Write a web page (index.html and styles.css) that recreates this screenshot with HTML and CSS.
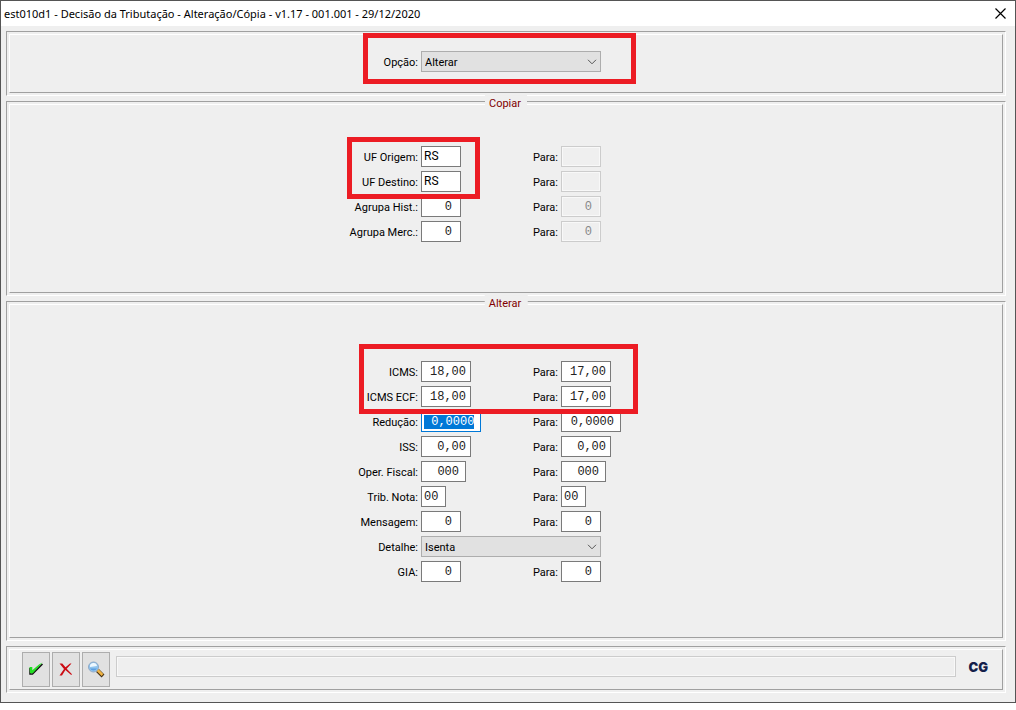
FILE: index.html
```html
<!DOCTYPE html>
<html lang="pt-BR">
<head>
<meta charset="utf-8">
<title>est010d1 - Decisão da Tributação</title>
<link rel="stylesheet" href="styles.css">
</head>
<body>
<main class="window">
  <header class="titlebar">
    <h1 class="title">est010d1 - Decisão da Tributação - Alteração/Cópia - v1.17 - 001.001 - 29/12/2020</h1>
    <button class="close" type="button" aria-label="Fechar">
      <svg width="11" height="11" viewBox="0 0 11 11"><path d="M.5.5l10 10M10.500.5l-10 10" stroke="#000" stroke-width="1.200" fill="none"/></svg>
    </button>
  </header>

  <section class="panel panel-option">
    <div class="panel-inner">
      <div class="form">
        <label for="opcao">Opção:</label>
        <div class="combo">
          <select id="opcao"><option>Alterar</option><option>Copiar</option></select>
          <svg class="chevron" width="10" height="6" viewBox="0 0 10 6"><path d="M1 .8l4 4 4-4"/></svg>
        </div>
        <span class="mark mark-option"></span>
      </div>
    </div>
  </section>

  <section class="panel panel-copy">
    <h2 class="legend">Copiar</h2>
    <div class="panel-inner">
      <div class="form">
        <label for="ufo">UF Origem:</label><input id="ufo" class="w40 alpha" value="RS">
        <label for="ufo2">Para:</label><input id="ufo2" class="w40 alpha" disabled>
        <label for="ufd">UF Destino:</label><input id="ufd" class="w40 alpha" value="RS">
        <label for="ufd2">Para:</label><input id="ufd2" class="w40 alpha" disabled>
        <label for="hist">Agrupa Hist.:</label><input id="hist" class="w40" value="0">
        <label for="hist2">Para:</label><input id="hist2" class="w40" value="0" disabled>
        <label for="merc">Agrupa Merc.:</label><input id="merc" class="w40" value="0">
        <label for="merc2">Para:</label><input id="merc2" class="w40" value="0" disabled>
        <span class="mark mark-uf"></span>
      </div>
    </div>
  </section>

  <section class="panel panel-change">
    <h2 class="legend">Alterar</h2>
    <div class="panel-inner">
      <div class="form">
        <label for="icms">ICMS:</label><input id="icms" class="w50" value="18,00">
        <label for="icms2">Para:</label><input id="icms2" class="w50" value="17,00">
        <label for="ecf">ICMS ECF:</label><input id="ecf" class="w50" value="18,00">
        <label for="ecf2">Para:</label><input id="ecf2" class="w50" value="17,00">
        <label for="red">Redução:</label><input id="red" class="w60" value=" 0,0000">
        <label for="red2">Para:</label><input id="red2" class="w60" value="0,0000">
        <label for="iss">ISS:</label><input id="iss" class="w50" value="0,00">
        <label for="iss2">Para:</label><input id="iss2" class="w50" value="0,00">
        <label for="oper">Oper. Fiscal:</label><input id="oper" class="w45" value="000">
        <label for="oper2">Para:</label><input id="oper2" class="w45" value="000">
        <label for="trib">Trib. Nota:</label><input id="trib" class="w25" value="00">
        <label for="trib2">Para:</label><input id="trib2" class="w25" value="00">
        <label for="msg">Mensagem:</label><input id="msg" class="w40" value="0">
        <label for="msg2">Para:</label><input id="msg2" class="w40" value="0">
        <label for="det">Detalhe:</label>
        <div class="combo">
          <select id="det"><option>Isenta</option></select>
          <svg class="chevron" width="10" height="6" viewBox="0 0 10 6"><path d="M1 .8l4 4 4-4"/></svg>
        </div>
        <label for="gia">GIA:</label><input id="gia" class="w40" value="0">
        <label for="gia2">Para:</label><input id="gia2" class="w40" value="0">
        <span class="mark mark-icms"></span>
      </div>
    </div>
  </section>

  <footer class="panel panel-footer">
    <div class="panel-inner toolbar">
      <button class="tool" type="button" aria-label="Confirmar">
        <svg width="16" height="16" viewBox="0 0 16 16"><path d="M2 6v6h2.500L14.500 2" stroke="#111" stroke-width="1.500" fill="none"/><path d="M1.500 5h2.800v3.300L11 2.500 14.500.5 4.800 11.300H2z" fill="#22e022"/></svg>
      </button>
      <button class="tool" type="button" aria-label="Cancelar">
        <svg width="16" height="16" viewBox="0 0 16 16"><path d="M1.500 1.500h2.800l3.200 3.700L12 1.500h1.500L8.700 6.700l5.300 5.500-.8.800-5.800-5L4 13.500H1.500l4.500-6.600z" fill="#cc0c14"/></svg>
      </button>
      <button class="tool" type="button" aria-label="Pesquisar">
        <svg width="18" height="18" viewBox="0 0 18 18"><path d="M10.500 9.500l5.500 5.500" stroke="#443014" stroke-width="4"/><path d="M10.500 9l5 5" stroke="#f0b444" stroke-width="2.500"/><circle cx="6.500" cy="6" r="5" fill="#8fc4ef" stroke="#8fa9c6"/><path d="M3 6a3.500 3.500 0 0 1 7-1z" fill="#eef8ff"/><path d="M3 7.500h7a4 4 0 0 1-7 0z" fill="#5c9ee0"/></svg>
      </button>
      <input class="status" aria-label="Mensagem de status" disabled>
      <span class="brand">CG</span>
    </div>
  </footer>
</main>
<script src="script.js"></script>
</body>
</html>
```
FILE: styles.css
```css
* { box-sizing: border-box; }
body {
  margin: 0;
  background: #fff;
  color: #000;
  font: 11px/21px Roboto, "Liberation Sans", sans-serif;
}
.window {
  display: flex;
  flex-direction: column;
  border: 1px solid #555;
  background: #efefef;
}
.titlebar {
  display: flex;
  justify-content: space-between;
  align-items: center;
  height: 25px;
  padding: 0 9px 0 3px;
  background: #fff;
}
.title {
  margin: 0;
  font: 11px/24px "Noto Sans", "Open Sans", sans-serif;
}
.close {
  display: flex;
  padding: 0;
  border: 0;
  background: none;
}
.panel {
  position: relative;
  margin: 5px 9px 0 5px;
  padding: 2px;
  border: 1px solid;
  border-color: #a0a0a0 #fff #fff #a0a0a0;
}
.panel-inner {
  border: 1px solid;
  border-color: #fff #a0a0a0 #a0a0a0 #fff;
}
.panel-option .panel-inner { padding: 16px 0 20px; min-height: 59px; }
.panel-copy .panel-inner { padding: 41px 0 50px; }
.panel-change .panel-inner { padding: 56px 0 55px; }
.panel-footer { margin-bottom: 9px; }
.legend {
  position: absolute;
  top: -8px;
  left: 50%;
  transform: translateX(-50%);
  margin: 0;
  padding: 0 6px 0 4px;
  background: #efefef;
  color: #800000;
  font-size: 11px;
  font-weight: 400;
  line-height: 20px;
}
.form {
  position: relative;
  display: grid;
  grid-template-columns: 70px 100px 34px 103px;
  gap: 4px 3px;
  width: 316px;
  margin: 0 auto;
}
.form label {
  height: 21px;
  padding-top: 1px;
  text-align: right;
  white-space: nowrap;
}
input {
  height: 21px;
  padding: 1px 4px 0 2px;
  border: 1px solid #7a7a7a;
  border-radius: 0;
  outline: 0;
  background: #fff;
  color: #222;
  font: 12px "Liberation Mono", monospace;
  text-align: right;
}
input:focus { border-color: #0078d7; }
input::selection { background: #0078d7; color: #fff; }
input:disabled {
  border-color: #ccc;
  background: #efefef;
  color: #888;
  box-shadow: inset 0 0 0 1px #f8f8f8;
}
.w25 { width: 25px; text-align: left; }
.w40 { width: 40px; padding-right: 8px; }
.w45 { width: 45px; padding-right: 6px; }
.w50 { width: 50px; }
.w60 { width: 60px; padding-right: 6px; }
.alpha {
  padding-top: 0;
  padding-bottom: 1px;
  color: #000;
  font-size: 12px;
  font-family: Roboto, "Liberation Sans", sans-serif;
  text-align: left;
}
.combo {
  grid-column: span 3;
  position: relative;
  width: 180px;
  height: 21px;
}
.combo select {
  appearance: none;
  display: block;
  width: 100%;
  height: 100%;
  padding: 2px 20px 0 3px;
  border: 1px solid #adadad;
  border-radius: 0;
  background: #e1e1e1;
  color: #000;
  font: inherit;
  line-height: 17px;
}
.chevron {
  position: absolute;
  top: 8px;
  right: 4px;
  fill: none;
  stroke: #555;
  pointer-events: none;
}
.mark {
  position: absolute;
  border: 5px solid #ec1c24;
  pointer-events: none;
}
.mark-option { left: 15px; top: -18px; width: 273px; height: 51px; }
.mark-uf { left: -1px; top: -9px; width: 133px; height: 62px; }
.mark-icms { left: 11px; top: -17px; width: 279px; height: 70px; }
.toolbar {
  display: flex;
  align-items: flex-start;
  gap: 2px;
  padding: 2px 14px 2px 12px;
}
.tool {
  display: flex;
  align-items: center;
  justify-content: center;
  width: 28px;
  height: 35px;
  padding: 0;
  border: 1px solid #adadad;
  background: #e1e1e1;
}
.status {
  flex: 1;
  min-width: 0;
  margin: 4px 10px 0 4px;
}
.brand {
  padding-top: 5px;
  color: #14204a;
  font: 900 13px/21px Inter, sans-serif;
}
```
FILE: script.js
```js
const field = document.getElementById("red");
field.focus();
field.select();
```
